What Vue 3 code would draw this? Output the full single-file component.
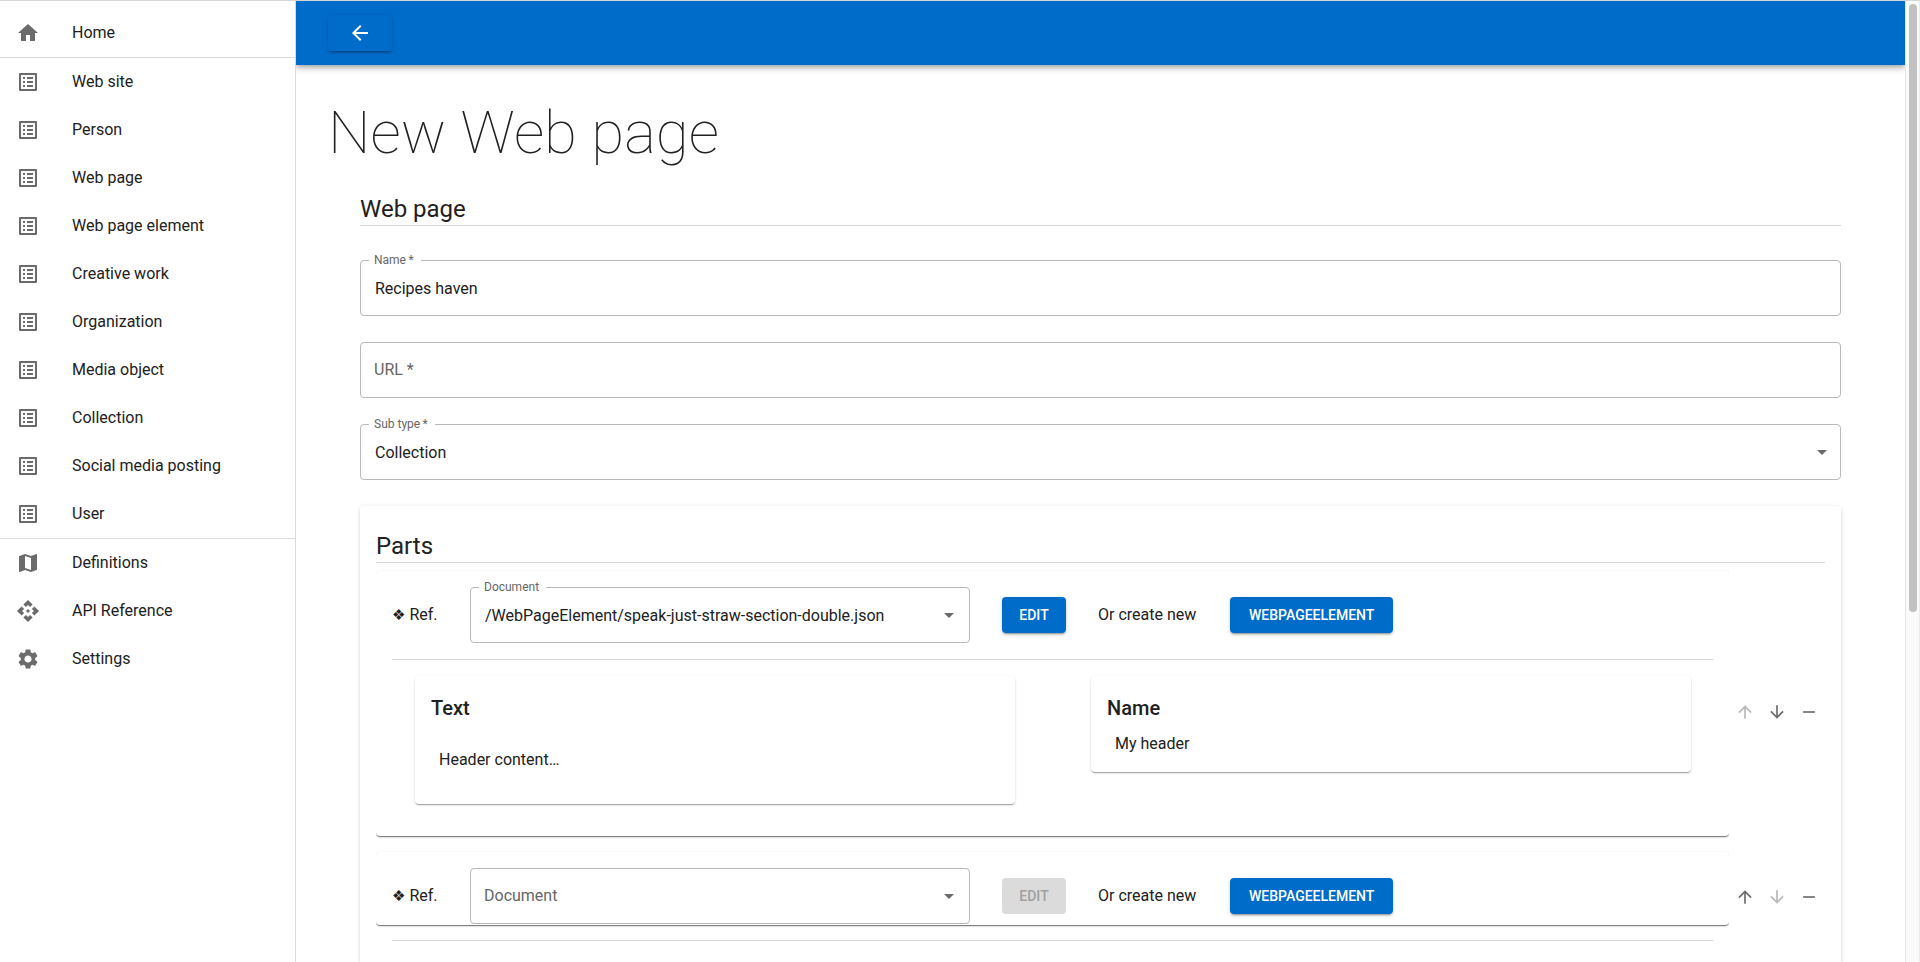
<script setup>
import { reactive } from 'vue'

const icons = {
  home: 'M10 20v-6h4v6h5v-8h3L12 3 2 12h3v8z',
  list: 'M19 5v14H5V5h14m1.1-2H3.9c-.5 0-.9.4-.9.9v16.2c0 .4.4.9.9.9h16.2c.4 0 .9-.5.9-.9V3.9c0-.5-.5-.9-.9-.9zM11 7h6v2h-6V7zm0 4h6v2h-6v-2zm0 4h6v2h-6zM7 7h2v2H7zm0 4h2v2H7zm0 4h2v2H7z',
  map: 'm20.5 3-.16.03L15 5.1 9 3 3.36 4.9c-.21.07-.36.25-.36.48V20.5c0 .28.22.5.5.5l.16-.03L9 18.9l6 2.1 5.64-1.9c.21-.07.36-.25.36-.48V3.5c0-.28-.22-.5-.5-.5zM15 19l-6-2.11V5l6 2.11V19z',
  api: 'm14 12-2 2-2-2 2-2 2 2zm-2-6 2.12 2.12 2.5-2.5L12 1 7.38 5.62l2.5 2.5L12 6zm-6 6 2.12-2.12-2.5-2.5L1 12l4.62 4.62 2.5-2.5L6 12zm12 0-2.12 2.12 2.5 2.5L23 12l-4.62-4.62-2.5 2.5L18 12zm-6 6-2.12-2.12-2.5 2.5L12 23l4.62-4.62-2.5-2.5L12 18z',
  settings: 'M19.14 12.94c.04-.3.06-.61.06-.94 0-.32-.02-.64-.07-.94l2.03-1.58c.18-.14.23-.41.12-.61l-1.92-3.32c-.12-.22-.37-.29-.59-.22l-2.39.96c-.5-.38-1.03-.7-1.62-.94l-.36-2.54c-.04-.24-.24-.41-.48-.41h-3.84c-.24 0-.43.17-.47.41l-.36 2.54c-.59.24-1.13.57-1.62.94l-2.39-.96c-.22-.08-.47 0-.59.22L2.74 8.87c-.12.21-.08.47.12.61l2.03 1.58c-.05.3-.09.63-.09.94s.02.64.07.94l-2.03 1.58c-.18.14-.23.41-.12.61l1.92 3.32c.12.22.37.29.59.22l2.39-.96c.5.38 1.03.7 1.62.94l.36 2.54c.05.24.24.41.48.41h3.84c.24 0 .44-.17.47-.41l.36-2.54c.59-.24 1.13-.56 1.62-.94l2.39.96c.22.08.47 0 .59-.22l1.92-3.32c.12-.22.07-.47-.12-.61l-2.01-1.58zM12 15.6c-1.98 0-3.6-1.62-3.6-3.6s1.62-3.6 3.6-3.6 3.6 1.62 3.6 3.6-1.62 3.6-3.6 3.6z',
  back: 'M20 11H7.83l5.59-5.59L12 4l-8 8 8 8 1.41-1.41L7.83 13H20v-2z',
  up: 'm4 12 1.41 1.41L11 7.83V20h2V7.83l5.58 5.59L20 12l-8-8-8 8z',
  down: 'm20 12-1.41-1.41L13 16.17V4h-2v12.17l-5.58-5.59L4 12l8 8 8-8z',
  remove: 'M19 13H5v-2h14v2z',
  caret: 'm7 10 5 5 5-5z'
}

const menu = [
  [{ label: 'Home', icon: 'home' }],
  [
    'Web site', 'Person', 'Web page', 'Web page element', 'Creative work',
    'Organization', 'Media object', 'Collection', 'Social media posting', 'User'
  ].map((label) => ({ label, icon: 'list' })),
  [
    { label: 'Definitions', icon: 'map' },
    { label: 'API Reference', icon: 'api' },
    { label: 'Settings', icon: 'settings' }
  ]
]

const form = reactive({ name: 'Recipes haven', url: '', subType: 'Collection' })

const documents = ['/WebPageElement/speak-just-straw-section-double.json']

const parts = reactive([
  {
    document: documents[0],
    preview: [
      { title: 'Text', body: 'Header content…', rich: true },
      { title: 'Name', body: 'My header', rich: false }
    ]
  },
  { document: '', preview: [] }
])

function move(index, step) {
  const [part] = parts.splice(index, 1)
  parts.splice(index + step, 0, part)
}
</script>

<template>
  <div class="app">
    <nav class="sidebar" aria-label="Main">
      <ul v-for="(group, g) in menu" :key="g" class="menu">
        <li v-for="item in group" :key="item.label">
          <a href="#" class="menu-link">
            <svg class="icon" viewBox="0 0 24 24" aria-hidden="true"><path :d="icons[item.icon]" /></svg>
            <span>{{ item.label }}</span>
          </a>
        </li>
      </ul>
    </nav>

    <div class="page">
      <header class="topbar">
        <button type="button" class="btn" aria-label="Back">
          <svg class="icon icon-back" viewBox="0 0 24 24" aria-hidden="true"><path :d="icons.back" /></svg>
        </button>
      </header>

      <main class="content">
        <h1 class="title">New Web page</h1>
        <form class="form" @submit.prevent>
          <h2 class="heading">Web page</h2>

          <div class="fields">
            <div class="field" :class="{ filled: form.name }">
              <input id="name" v-model="form.name" class="control" type="text" />
              <label class="label" for="name">Name&thinsp;*</label>
            </div>
            <div class="field" :class="{ filled: form.url }">
              <input id="url" v-model="form.url" class="control" type="text" />
              <label class="label" for="url">URL *</label>
            </div>
            <div class="field" :class="{ filled: form.subType }">
              <select id="subtype" v-model="form.subType" class="control">
                <option>Collection</option>
              </select>
              <label class="label" for="subtype">Sub type&thinsp;*</label>
              <svg class="icon caret" viewBox="0 0 24 24" aria-hidden="true"><path :d="icons.caret" /></svg>
            </div>
          </div>

          <section class="parts">
            <h2 class="heading">Parts</h2>
            <ul class="part-list">
              <li v-for="(part, i) in parts" :key="i" class="part">
                <div class="part-clip">
                  <div class="part-paper">
                    <div class="ref-row">
                      <span class="ref"><span class="diamond">❖</span> Ref.</span>
                      <div class="field document" :class="{ filled: part.document }">
                        <select :id="'doc' + i" v-model="part.document" class="control">
                          <option v-for="d in documents" :key="d">{{ d }}</option>
                        </select>
                        <label class="label" :for="'doc' + i">Document</label>
                        <svg class="icon caret" viewBox="0 0 24 24" aria-hidden="true"><path :d="icons.caret" /></svg>
                      </div>
                      <button type="button" class="btn" :disabled="!part.document">EDIT</button>
                      <span class="alternative">Or create new</span>
                      <button type="button" class="btn btn-wide">WEBPAGEELEMENT</button>
                    </div>
                    <hr class="rule" :class="{ hanging: !part.preview.length }" />
                    <div v-if="part.preview.length" class="previews">
                      <article v-for="p in part.preview" :key="p.title" class="preview">
                        <h3 class="preview-title">{{ p.title }}</h3>
                        <p class="preview-body" :class="{ rich: p.rich }">{{ p.body }}</p>
                      </article>
                    </div>
                  </div>
                </div>
                <div class="actions">
                  <button type="button" class="action" aria-label="Move up" :disabled="i === 0" @click="move(i, -1)">
                    <svg class="icon" viewBox="0 0 24 24" aria-hidden="true"><path :d="icons.up" /></svg>
                  </button>
                  <button type="button" class="action" aria-label="Move down" :disabled="i === parts.length - 1" @click="move(i, 1)">
                    <svg class="icon" viewBox="0 0 24 24" aria-hidden="true"><path :d="icons.down" /></svg>
                  </button>
                  <button type="button" class="action" aria-label="Remove" @click="parts.splice(i, 1)">
                    <svg class="icon" viewBox="0 0 24 24" aria-hidden="true"><path :d="icons.remove" /></svg>
                  </button>
                </div>
              </li>
            </ul>
          </section>
        </form>
      </main>
    </div>

    <div class="scroll-track" aria-hidden="true"><div class="scroll-thumb"></div></div>
  </div>
</template>

<style>
body {
  margin: 0;
  background: #fff;
}
</style>

<style scoped>
.app,
.app * {
  box-sizing: border-box;
}

.app {
  display: flex;
  height: 100vh;
  overflow: hidden;
  border-top: 1px solid #d6d6d6;
  color: #212121;
  font-family: Roboto, "Liberation Sans", sans-serif;
  font-size: 16px;
  line-height: 24px;
}

.icon {
  display: block;
  flex: none;
  width: 24px;
  height: 24px;
  fill: #6b6b6b;
}

.sidebar {
  flex: none;
  width: 296px;
  padding-top: 8px;
  border-right: 1px solid #dadada;
}

.menu {
  margin: 0;
  padding: 0;
  list-style: none;
}

.menu + .menu {
  border-top: 1px solid #dadada;
}

.menu-link {
  display: flex;
  align-items: center;
  gap: 32px;
  height: 48px;
  padding: 0 16px;
  color: inherit;
  text-decoration: none;
}

.page {
  flex: 1;
  min-width: 0;
  overflow: hidden;
}

.topbar {
  display: flex;
  align-items: center;
  height: 64px;
  padding: 0 32px;
  background: #006cc9;
  box-shadow: 0 2px 4px -1px rgba(0, 0, 0, 0.2), 0 4px 5px rgba(0, 0, 0, 0.14), 0 1px 10px rgba(0, 0, 0, 0.12);
}

.btn {
  display: inline-flex;
  align-items: center;
  justify-content: center;
  min-width: 64px;
  height: 36px;
  padding: 0 16px;
  border: 0;
  border-radius: 4px;
  background: #006cc9;
  color: #fff;
  font: 500 14px/24px Roboto, "Liberation Sans", sans-serif;
  box-shadow: 0 3px 1px -2px rgba(0, 0, 0, 0.2), 0 2px 2px rgba(0, 0, 0, 0.14), 0 1px 5px rgba(0, 0, 0, 0.12);
}

.btn:disabled {
  background: #dbdbdb;
  color: #a0a0a0;
  box-shadow: none;
}

.btn-wide {
  padding: 0 19px;
}

.icon-back {
  fill: #fff;
}

.content {
  padding: 32px;
}

.title {
  margin: 0;
  font-size: 60px;
  font-weight: 100;
  line-height: 72px;
}

.form {
  padding: 24px 32px 0;
}

.heading {
  margin: 0;
  border-bottom: 1px solid #d6d6d6;
  font-size: 24px;
  font-weight: 400;
  line-height: 32px;
}

.fields {
  display: grid;
  gap: 26px;
  padding: 34px 0 26px;
}

.field {
  position: relative;
}

.control {
  display: block;
  width: 100%;
  height: 56px;
  margin: 0;
  padding: 0 14px;
  border: 1px solid #b8b8b8;
  border-radius: 4px;
  outline: 0;
  appearance: none;
  background: #fff;
  color: inherit;
  font: inherit;
}

select.control {
  padding-top: 2px;
}

.label {
  position: absolute;
  top: 16px;
  left: 9px;
  padding: 0 5px;
  background: #fff;
  color: #666;
  pointer-events: none;
}

.filled .label {
  top: -8px;
  padding-right: 7px;
  font-size: 12px;
  line-height: 16px;
}

.caret {
  position: absolute;
  top: 16px;
  right: 7px;
  pointer-events: none;
}

.parts {
  padding: 24px 16px;
  border-radius: 4px;
  box-shadow: 0 3px 1px -2px rgba(0, 0, 0, 0.2), 0 2px 2px rgba(0, 0, 0, 0.14), 0 1px 5px rgba(0, 0, 0, 0.12);
}

.part-list {
  margin: 0;
  padding: 8px 0 0;
  list-style: none;
}

.part {
  display: flex;
  align-items: center;
}

/* Keeps the paper's shadow off its left and right edges. */
.part-clip {
  flex: 1;
  min-width: 0;
  padding-bottom: 16px;
  clip-path: inset(-4px 0);
}

.part-paper {
  display: flow-root;
  padding: 16px 16px 0;
  border-radius: 4px;
  box-shadow: 0 2px 1px -1px rgba(0, 0, 0, 0.3), 0 1px 1px rgba(0, 0, 0, 0.24), 0 1px 3px rgba(0, 0, 0, 0.16);
}

.ref-row {
  display: flex;
  align-items: center;
  gap: 32px;
}

.ref {
  flex: none;
  width: 46px;
  white-space: nowrap;
}

.diamond {
  font-family: "DejaVu Sans", sans-serif;
  font-size: 15px;
}

.document {
  flex: 0 1 500px;
}

.document .caret {
  right: 9px;
}

.alternative {
  flex: none;
  width: 100px;
}

.rule {
  height: 1px;
  margin: 16px 0 0;
  border: 0;
  background: #d6d6d6;
}

.rule.hanging {
  margin-bottom: -16px;
}

.previews {
  display: flex;
  align-items: flex-start;
  gap: 76px;
  padding: 16px 22px 32px 23px;
}

.preview {
  flex: 1;
  padding: 16px;
  border-radius: 4px;
  box-shadow: 0 2px 1px -1px rgba(0, 0, 0, 0.2), 0 1px 1px rgba(0, 0, 0, 0.14), 0 1px 3px rgba(0, 0, 0, 0.12);
}

.preview-title {
  margin: 0;
  font-size: 20px;
  font-weight: 500;
  line-height: 32px;
}

.preview-body {
  margin: 0;
  padding: 8px 8px 0;
}

.preview-body.rich {
  padding: 24px 8px 16px;
}

.actions {
  display: flex;
  flex: none;
}

.action {
  display: grid;
  place-items: center;
  width: 32px;
  height: 32px;
  padding: 0;
  border: 0;
  background: none;
}

.action .icon {
  width: 20px;
  height: 20px;
}

.action:disabled .icon {
  fill: #b8b8b8;
}

.scroll-track {
  flex: none;
  width: 15px;
  padding: 3px;
  border-right: 1px solid #ececec;
  border-left: 1px solid #e4e4e4;
  background: #fafafa;
}

.scroll-thumb {
  width: 8px;
  height: calc(64% - 3px);
  border-radius: 4px;
  background: #c1c1c1;
}
</style>
